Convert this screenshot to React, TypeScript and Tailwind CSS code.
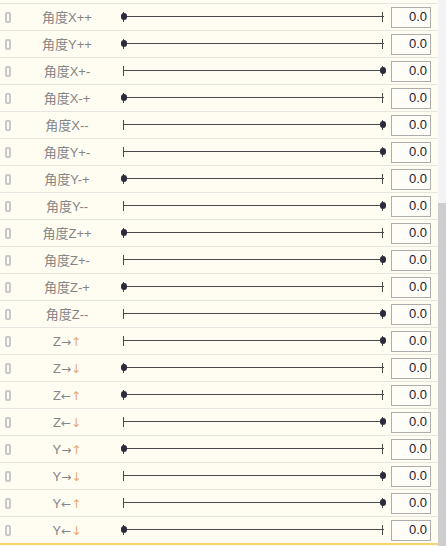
import React from 'react';

type Row = { label: React.ReactNode; right: boolean };

const arrow = (a: string, b: string) => (
  <span style={{ fontFamily: '"DejaVu Sans", sans-serif' }} className="text-[12px]">
    <span>{a}</span>
    <span className="text-[#e9a96b]">{b}</span>
  </span>
);

const rows: Row[] = [
  { label: '角度X++', right: false },
  { label: '角度Y++', right: false },
  { label: '角度X+-', right: true },
  { label: '角度X-+', right: false },
  { label: '角度X--', right: true },
  { label: '角度Y+-', right: true },
  { label: '角度Y-+', right: false },
  { label: '角度Y--', right: true },
  { label: '角度Z++', right: false },
  { label: '角度Z+-', right: true },
  { label: '角度Z-+', right: false },
  { label: '角度Z--', right: true },
  { label: <>Z{arrow('→', '↑')}</>, right: true },
  { label: <>Z{arrow('→', '↓')}</>, right: false },
  { label: <>Z{arrow('←', '↑')}</>, right: false },
  { label: <>Z{arrow('←', '↓')}</>, right: true },
  { label: <>Y{arrow('→', '↑')}</>, right: false },
  { label: <>Y{arrow('→', '↓')}</>, right: true },
  { label: <>Y{arrow('←', '↑')}</>, right: true },
  { label: <>Y{arrow('←', '↓')}</>, right: false },
];

const Slider: React.FC<{ right: boolean }> = ({ right }) => (
  <div className="relative w-[261px] h-[12px] ml-[9px]">
    <div className="absolute left-0 right-0 top-[5px] h-px bg-[#4a4a4a]" />
    <div className="absolute left-0 top-[1px] w-px h-[10px] bg-[#4a4a4a]" />
    <div className="absolute right-px top-[1px] w-px h-[10px] bg-[#4a4a4a]" />
    <div
      className={
        right
          ? 'absolute right-[-2px] top-[2px] w-[6px] h-[7px] rounded-full bg-[#2b2b3d]'
          : 'absolute left-[-2px] top-[2px] w-[6px] h-[7px] rounded-full bg-[#2b2b3d]'
      }
    />
  </div>
);

const App: React.FC = () => {
  return (
    <div className="w-[446px] h-[546px] flex bg-[#fffcf2] overflow-hidden" style={{ fontFamily: '"Liberation Sans", "Noto Sans CJK SC", sans-serif' }}>
      <div className="w-[438px] flex flex-col pt-[3px]">
        {rows.map((r, i) => (
          <div key={i} className="flex items-center h-[27px] border-t border-[#e7e5df] shrink-0">
            <div className="w-[20px] flex pl-[5px]">
              <div className="w-[6px] h-[11px] border-2 border-[#c8c8c8] rounded-[2px]" />
            </div>
            <div className="w-[94px] text-center text-[13px] text-[#858585] leading-none">{r.label}</div>
            <Slider right={r.right} />
            <div className="ml-[7px] w-[40px] h-[21px] border border-[#adadad] bg-[#fffdf7] flex items-center justify-end pr-[3px] text-[13px] text-[#1c1c30]">
              0.0
            </div>
          </div>
        ))}
        <div className="h-[2px] bg-[#f6d36a] mt-auto mb-px" />
      </div>
      <div className="w-[8px] flex flex-col">
        <div className="h-[203px] bg-[#f3f3f3]" />
        <div className="flex-1 bg-[#cdcdcd]" />
      </div>
    </div>
  );
};

export default App;
